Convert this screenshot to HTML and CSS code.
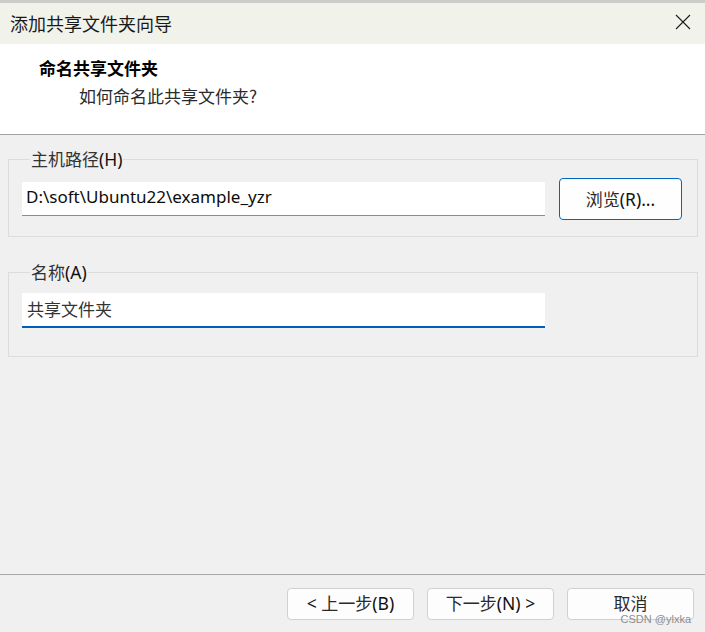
FILE: index.html
```html
<!DOCTYPE html>
<html lang="zh-CN">
<head>
<meta charset="utf-8">
<title>添加共享文件夹向导</title>
<link rel="stylesheet" href="styles.css">
</head>
<body>
<div class="window">
  <div class="titlebar">
    <span class="title">添加共享文件夹向导</span>
    <svg class="close" width="16" height="16" viewBox="0 0 16 16" aria-label="关闭">
      <path d="M1 1 L15 15 M15 1 L1 15" stroke="#1b1b1b" stroke-width="1.1" fill="none"/>
    </svg>
  </div>
  <div class="header">
    <h1 class="heading">命名共享文件夹</h1>
    <p class="subheading">如何命名此共享文件夹?</p>
  </div>
  <main class="content">
    <fieldset class="group group-path">
      <legend class="legend">主机路径<span class="lat">(H)</span></legend>
      <div class="row">
        <div class="input input-path">D:\soft\Ubuntu22\example_yzr</div>
        <button class="btn btn-browse" type="button"><span class="label">浏览<span class="lat">(R)...</span></span></button>
      </div>
    </fieldset>
    <fieldset class="group group-name">
      <legend class="legend">名称<span class="lat">(A)</span></legend>
      <div class="row">
        <div class="input input-name focused">共享文件夹</div>
      </div>
    </fieldset>
  </main>
  <footer class="footer">
    <button class="btn btn-nav" type="button"><span class="label"><span class="lat">&lt;&nbsp;</span>上一步<span class="lat">(B)</span></span></button>
    <button class="btn btn-nav" type="button"><span class="label">下一步<span class="lat">(N)&nbsp;&gt;</span></span></button>
    <button class="btn btn-nav" type="button"><span class="label">取消</span></button>
    <span class="watermark">CSDN @ylxka</span>
  </footer>
</div>
</body>
</html>
```
FILE: styles.css
```css
* { box-sizing: border-box; }

html, body {
  margin: 0;
  padding: 0;
}

body {
  width: 705px;
  height: 632px;
  overflow: hidden;
  background: #f0f0f0;
  font-family: "Noto Sans CJK SC", "Noto Sans", sans-serif;
  color: #1a1a1a;
}

.window {
  width: 705px;
  height: 632px;
  display: flex;
  flex-direction: column;
  position: relative;
}

.lat {
  font-family: "Noto Sans", "Noto Sans CJK SC", sans-serif;
  font-size: 17.5px;
  color: #111;
}

/* Title bar */
.titlebar {
  height: 44px;
  flex: 0 0 44px;
  background: #f1f2ea;
  border-top: 3px solid #cbcbc8;
  display: flex;
  align-items: center;
  justify-content: space-between;
  padding: 0 14px 0 10px;
}

.title {
  font-size: 18px;
  line-height: 22px;
  color: #1a1a1a;
  margin-top: -2px;
}

.close {
  display: block;
  margin-top: -3px;
}

/* Header */
.header {
  height: 91px;
  flex: 0 0 91px;
  background: #ffffff;
  border-bottom: 1px solid #a3a3a3;
  padding-top: 14px;
}

.heading {
  margin: 0 0 0 39px;
  font-size: 17px;
  line-height: 20px;
  font-weight: 700;
  color: #000;
}

.subheading {
  margin: 8px 0 0 79px;
  font-size: 17px;
  line-height: 20px;
  color: #2a2a2a;
}

/* Content */
.content {
  flex: 1;
  padding: 14px 7px 0 8px;
  display: flex;
  flex-direction: column;
  gap: 25px;
}

.group {
  margin: 0;
  border: 1px solid #dcdcdc;
  min-width: 0;
  width: 690px;
}

.group-path {
  padding: 9px 15px 16px 13px;
}

.group-name {
  padding: 11px 15px 28px 13px;
}

.legend {
  padding: 0 1px;
  margin-left: 8px;
  font-size: 17px;
  height: 20px;
  line-height: 20px;
  color: #333;
}

.legend .lat {
  line-height: 20px;
  vertical-align: top;
}

.row {
  display: flex;
  align-items: center;
  gap: 14px;
  height: 42px;
}

.group-name .row {
  height: 35px;
  align-items: flex-start;
}

.input {
  width: 523px;
  height: 34px;
  background: #ffffff;
  border-bottom: 1px solid #8c8c8c;
  padding: 0 4px;
  display: flex;
  align-items: center;
  font-size: 17px;
  color: #111;
}

.input-path {
  font-family: "Noto Sans", sans-serif;
  font-size: 17px;
  color: #0c0c0c;
  padding-bottom: 4px;
}

.input-name {
  height: 35px;
  border-bottom: 2px solid #005fb8;
  padding-left: 5px;
  padding-bottom: 2px;
  color: #333;
}

.btn {
  font-family: "Noto Sans CJK SC", "Noto Sans", sans-serif;
  background: #fdfdfd;
  border: 1px solid #d0d0d0;
  border-radius: 4px;
  font-size: 17px;
  color: #2a2a2a;
  padding: 0;
  display: flex;
  align-items: center;
  justify-content: center;
}

.label {
  white-space: nowrap;
  line-height: 20px;
}

.btn-browse {
  width: 123px;
  height: 42px;
  border-color: #0067c0;
  background: #fefefe;
}

/* Footer */
.footer {
  flex: 0 0 58px;
  height: 58px;
  border-top: 1px solid #a8a8a8;
  display: flex;
  justify-content: flex-end;
  align-items: flex-start;
  gap: 13px;
  padding: 13px 11px 0 0;
  position: relative;
}

.btn-nav {
  width: 127px;
  height: 32px;
  align-items: flex-start;
  padding-top: 4px;
}

.watermark {
  position: absolute;
  right: 14px;
  top: 39px;
  font-family: "Liberation Sans", sans-serif;
  font-size: 11px;
  line-height: 11px;
  color: #8e8e8e;
}
```
